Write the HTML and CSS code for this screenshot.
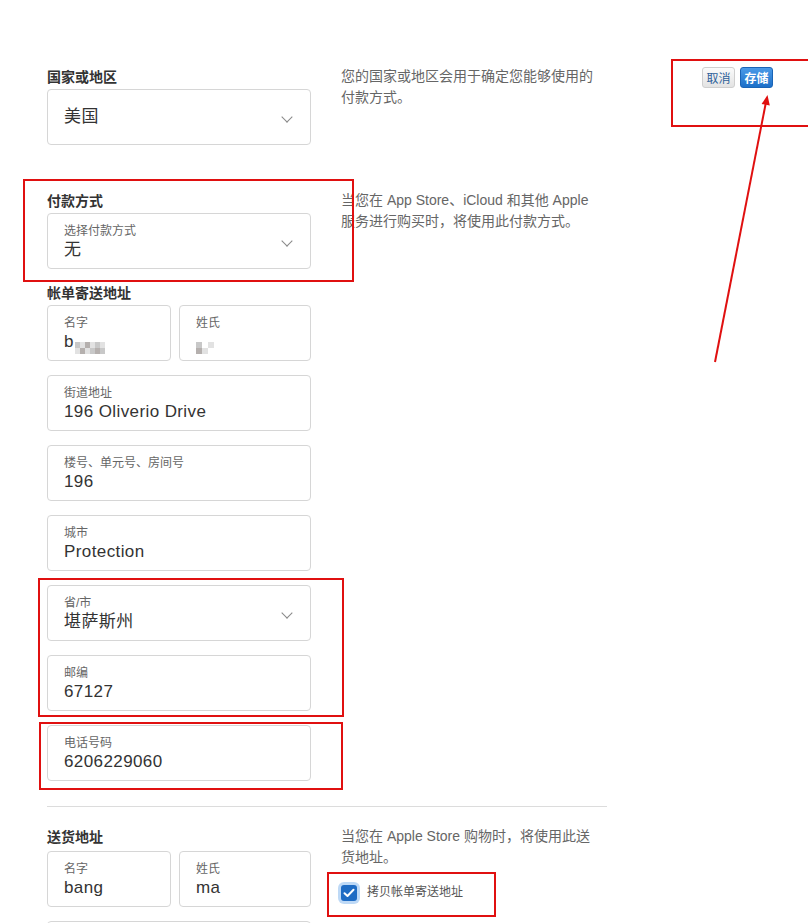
FILE: index.html
```html
<!DOCTYPE html>
<html lang="zh-CN">
<head>
  <meta charset="UTF-8">
  <title>付款与送货</title>
  <meta name="viewport" content="width=device-width, initial-scale=1.0">
  <link rel="stylesheet" href="styles.css">
</head>
<body>
  <div class="page">
    <div class="form">

      <div class="row row-country">
        <div class="col">
          <div class="label">国家或地区</div>
          <div class="field field-select field-plain">
            <div class="value">美国</div>
            <span class="chevron"></span>
          </div>
        </div>
        <div class="desc">您的国家或地区会用于确定您能够使用的付款方式。</div>
      </div>

      <div class="row row-payment">
        <div class="col">
          <div class="label">付款方式</div>
          <div class="field field-select">
            <div class="hint">选择付款方式</div>
            <div class="value">无</div>
            <span class="chevron"></span>
          </div>
        </div>
        <div class="desc">当您在 App Store、iCloud 和其他 Apple 服务进行购买时，将使用此付款方式。</div>
      </div>

      <div class="row row-billing">
        <div class="col">
          <div class="label">帐单寄送地址</div>
          <div class="fields">
            <div class="pair">
              <div class="field first">
                <div class="hint">名字</div>
                <div class="value">b<span class="mosaic m-first"><i class="c2"></i><i class="c1"></i><i class="c3"></i><i class="c1"></i><i class="c2"></i><i class="c1"></i><i class="c1"></i><i class="c3"></i><i class="c1"></i><i class="c2"></i><i class="c3"></i><i class="c2"></i></span></div>
              </div>
              <div class="field last">
                <div class="hint">姓氏</div>
                <div class="value"><span class="mosaic m-last"><i class="c2"></i><i class="c0"></i><i class="c1"></i><i class="c0"></i><i class="c3"></i><i class="c1"></i><i class="c0"></i><i class="c0"></i></span></div>
              </div>
            </div>
            <div class="field">
              <div class="hint">街道地址</div>
              <div class="value">196 Oliverio Drive</div>
            </div>
            <div class="field">
              <div class="hint">楼号、单元号、房间号</div>
              <div class="value">196</div>
            </div>
            <div class="field">
              <div class="hint">城市</div>
              <div class="value">Protection</div>
            </div>
            <div class="field field-select">
              <div class="hint">省/市</div>
              <div class="value">堪萨斯州</div>
              <span class="chevron"></span>
            </div>
            <div class="field">
              <div class="hint">邮编</div>
              <div class="value">67127</div>
            </div>
            <div class="field">
              <div class="hint">电话号码</div>
              <div class="value">6206229060</div>
            </div>
          </div>
        </div>
      </div>

      <hr class="divider">

      <div class="row row-shipping">
        <div class="col">
          <div class="label">送货地址</div>
          <div class="fields">
            <div class="pair">
              <div class="field first">
                <div class="hint">名字</div>
                <div class="value">bang</div>
              </div>
              <div class="field last">
                <div class="hint">姓氏</div>
                <div class="value">ma</div>
              </div>
            </div>
            <div class="field"></div>
          </div>
        </div>
        <div class="desc">
          当您在 Apple Store 购物时，将使用此送货地址。
          <label class="copy">
            <span class="checkbox">
              <svg width="12" height="10" viewBox="0 0 12 10"><path d="M1.5 5.2 L4.5 8 L10.5 1.8" fill="none" stroke="#fff" stroke-width="2" stroke-linecap="round" stroke-linejoin="round"/></svg>
            </span>
            拷贝帐单寄送地址
          </label>
        </div>
      </div>

    </div>

    <div class="actions">
      <button class="btn btn-cancel">取消</button>
      <button class="btn btn-save">存储</button>
    </div>
  </div>

  <!-- annotations -->
  <div class="mark mark-payment"></div>
  <div class="mark mark-actions"></div>
  <div class="mark mark-region"></div>
  <div class="mark mark-phone"></div>
  <div class="mark mark-copy"></div>
  <svg class="arrow" width="808" height="923" viewBox="0 0 808 923">
    <line x1="715" y1="362" x2="765.6" y2="104" stroke="#e01010" stroke-width="2"/>
    <polygon points="767.5,95 769.8,105.6 761.6,104" fill="#e01010"/>
  </svg>
</body>
</html>
```

FILE: styles.css
```css
body {
  margin: 0;
  background: #fff;
  color: #333;
  font-family: "Liberation Sans", "Noto Sans CJK SC", sans-serif;
  overflow: hidden;
}
.page {
  display: flex;
  padding: 67px 35px 0 47px;
  height: 856px;
  overflow: hidden;
}
.form {
  width: 560px;
}
.row {
  display: grid;
  grid-template-columns: 264px 258px;
  column-gap: 30px;
}
.row-country {
  padding-top: 1px;
}
.row-payment {
  margin-top: 47px;
}
.row-billing {
  margin-top: 15px;
}
.row-shipping .label {
  margin-bottom: 5px;
}
.label {
  font-size: 14px;
  line-height: 18px;
  font-weight: bold;
  color: #333;
  margin-bottom: 3px;
}
.desc {
  font-size: 14px;
  line-height: 21px;
  color: #666;
  margin-top: -2px;
}
.fields {
  display: flex;
  flex-direction: column;
  gap: 14px;
}
.pair {
  display: flex;
  gap: 8px;
}
.pair .first {
  width: 124px;
  flex: none;
}
.pair .last {
  flex: 1;
}
.field {
  position: relative;
  box-sizing: border-box;
  height: 56px;
  border: 1px solid #d6d6d6;
  border-radius: 4px;
  padding: 9px 16px 0 16px;
  background: #fff;
}
.field-plain {
  padding-top: 0;
  display: flex;
  align-items: center;
}
.hint {
  font-size: 12px;
  line-height: 16px;
  color: #666;
}
.value {
  font-size: 17px;
  line-height: 22px;
  letter-spacing: 0.4px;
  color: #333;
}
.chevron {
  position: absolute;
  right: 19px;
  top: 23px;
  width: 7px;
  height: 7px;
  border-right: 1px solid #888;
  border-bottom: 1px solid #888;
  transform: rotate(45deg);
}
.mosaic {
  display: inline-grid;
  vertical-align: -1px;
  margin-left: 1px;
}
.m-first {
  grid-template-columns: repeat(6, 5px);
  grid-template-rows: 6px 6px;
}
.m-last {
  grid-template-columns: repeat(4, 6px);
  grid-template-rows: 6px 6px;
  margin-left: 0;
}
.mosaic i {
  display: block;
}
.mosaic .c0 { background: #fff; }
.mosaic .c1 { background: #e2e2e2; }
.mosaic .c2 { background: #c8c8c8; }
.mosaic .c3 { background: #b5b0ae; }
.divider {
  border: none;
  border-top: 1px solid #dcdcdc;
  margin: 25px 0 21px 0;
  width: 560px;
}
.copy {
  display: flex;
  align-items: center;
  gap: 10px;
  margin-top: 14px;
  font-size: 12px;
  color: #555;
}
.checkbox {
  width: 16px;
  height: 16px;
  border-radius: 3px;
  background: #1f6cc4;
  box-shadow: 0 0 0 3px rgba(110, 170, 235, 0.45);
  display: flex;
  align-items: center;
  justify-content: center;
}
.actions {
  margin-left: auto;
  display: flex;
  gap: 5px;
  align-items: flex-start;
}
.btn {
  height: 21px;
  width: 33px;
  padding: 0;
  border-radius: 3px;
  font-family: "Noto Sans CJK SC", sans-serif;
  font-size: 12px;
  line-height: 19px;
  cursor: pointer;
}
.btn-cancel {
  background: linear-gradient(#fbfbfb, #e3e3e3);
  border: 1px solid #cfcfcf;
  color: #2f5f99;
}
.btn-save {
  background: linear-gradient(#4a9ae8, #1c6fc8);
  border: 1px solid #1a64b6;
  color: #fff;
  font-weight: bold;
}
.mark {
  position: absolute;
  border: 2px solid #e01010;
  box-sizing: border-box;
}
.mark-payment { left: 23px; top: 179px; width: 331px; height: 103px; }
.mark-actions { left: 671px; top: 59px; width: 150px; height: 68px; }
.mark-region { left: 38px; top: 578px; width: 306px; height: 139px; }
.mark-phone { left: 39px; top: 722px; width: 304px; height: 68px; }
.mark-copy { left: 327px; top: 872px; width: 169px; height: 45px; }
.arrow {
  position: absolute;
  left: 0;
  top: 0;
  pointer-events: none;
}
```
